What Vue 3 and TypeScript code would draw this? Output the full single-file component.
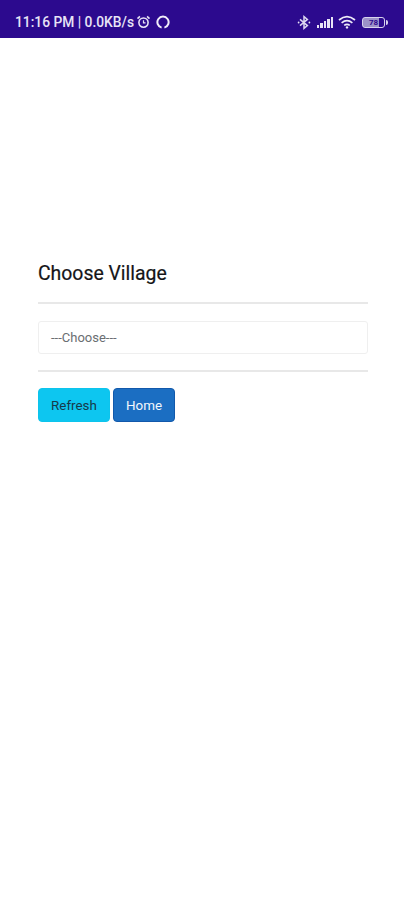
<script setup lang="ts">
const bars = [3, 5, 7, 9, 11]
</script>

<template>
  <div class="page">
    <header class="status">
      <div class="status-left">
        <span class="status-text">11:16 PM | 0.0KB/s</span>
        <svg class="ic-alarm" width="15" height="14" viewBox="0 0 14 14" fill="none" stroke="#e8e4f6">
          <circle cx="7" cy="7.6" r="4.6" stroke-width="1.6" />
          <path d="M7 5.2V7.8H9" stroke-width="1.2" />
          <path d="M1 3.6 3.4 1.4M13 3.6 10.6 1.4" stroke-width="1.6" />
        </svg>
        <svg class="ic-ring" width="14" height="14" viewBox="0 0 14 14" fill="none" stroke="#f0edf9">
          <path d="M5.6 12.6A5.6 5.6 0 1 1 8.4 12.6" stroke-width="2" />
        </svg>
      </div>
      <div class="status-right">
        <svg width="14" height="15" viewBox="0 0 14 15" fill="none" stroke="#dcd7f0" stroke-width="1.5">
          <path d="M3 4.4 10.4 10.6 7 13.4V1.6L10.4 4.4 3 10.6" />
          <circle cx="1.6" cy="7.5" r=".9" fill="#e8e4f6" stroke="none" />
          <circle cx="12.4" cy="7.5" r=".9" fill="#e8e4f6" stroke="none" />
        </svg>
        <div class="signal">
          <i v-for="h in bars" :key="h" :style="{ height: h + 'px' }"></i>
        </div>
        <svg width="18" height="14" viewBox="0 0 18 14" fill="none" stroke="#eeebf8" stroke-width="1.7">
          <path d="M1 5Q9-1.6 17 5" />
          <path d="M3.6 7.8Q9 3.4 14.4 7.8" />
          <path d="M6.2 10.4Q9 8.2 11.8 10.4" />
          <circle cx="9" cy="12.4" r="1.2" fill="#eeebf8" stroke="none" />
        </svg>
        <div class="battery">
          <div class="battery-body"><span>78</span></div>
          <div class="battery-tip"></div>
        </div>
      </div>
    </header>

    <main class="content">
      <h1 class="title">Choose Village</h1>
      <hr class="rule rule-top" />
      <div class="select">---Choose---</div>
      <hr class="rule rule-bottom" />
      <div class="actions">
        <button class="btn btn-refresh">Refresh</button>
        <button class="btn btn-home">Home</button>
      </div>
    </main>
  </div>
</template>

<style>
html,
body {
  background: #fff;
}
</style>

<style scoped>
.page {
  width: 404px;
  height: 900px;
  overflow: hidden;
  background: #fff;
  font-family: Roboto, "Liberation Sans", sans-serif;
}
.status {
  height: 38px;
  box-sizing: border-box;
  padding: 6px 16px 0 15px;
  background: #2c0a8e;
  display: flex;
  align-items: center;
  justify-content: space-between;
  color: #e8e4f6;
}
.status-left {
  display: flex;
  align-items: center;
}
.status-text {
  font-size: 13.8px;
  font-weight: 500;
  white-space: nowrap;
}
.ic-alarm {
  margin-left: 2px;
}
.ic-ring {
  margin-left: 5px;
}
.status-right {
  display: flex;
  align-items: center;
  gap: 5px;
}
.signal {
  display: flex;
  align-items: flex-end;
  gap: 1px;
  height: 12px;
  margin-left: 1px;
}
.signal i {
  display: block;
  width: 2.4px;
  background: #e8e4f6;
}
.battery {
  display: flex;
  align-items: center;
  margin-left: 1px;
}
.battery-body {
  width: 23px;
  height: 11px;
  box-sizing: border-box;
  border: 1px solid #d8d3ee;
  border-radius: 3px;
  background: linear-gradient(to right, #9c92c8 78%, transparent 78%);
  display: flex;
  align-items: center;
  justify-content: center;
}
.battery-body span {
  font-size: 8px;
  font-weight: 700;
  line-height: 9px;
  color: #2c0a8e;
}
.battery-tip {
  width: 2px;
  height: 5px;
  margin-left: 1px;
  border-radius: 0 2px 2px 0;
  background: #d8d3ee;
}
.content {
  padding: 224px 36px 0 38px;
}
.title {
  margin: 0;
  font-size: 19.4px;
  font-weight: 400;
  line-height: 24px;
  color: #151517;
  -webkit-text-stroke: 0.2px #151517;
}
.rule {
  height: 2px;
  border: 0;
  background: #e8e8e8;
}
.rule-top {
  margin: 16px 0 17px;
}
.rule-bottom {
  margin: 16px 0;
}
.select {
  height: 33px;
  box-sizing: border-box;
  padding-left: 12px;
  display: flex;
  align-items: center;
  border: 1px solid #efefef;
  border-radius: 3px;
  font-size: 13px;
  color: #6a6e72;
}
.actions {
  display: flex;
  gap: 3px;
}
.btn {
  height: 34px;
  padding: 0;
  border-radius: 4px;
  font-family: inherit;
  font-size: 13.4px;
  cursor: pointer;
}
.btn-refresh {
  width: 72px;
  border: 1px solid #0dc4ec;
  background: #0dc6f0;
  color: #173a4a;
}
.btn-home {
  width: 62px;
  border: 1px solid #1259ab;
  background: #1b6ec2;
  color: #f2f7fc;
}
</style>
